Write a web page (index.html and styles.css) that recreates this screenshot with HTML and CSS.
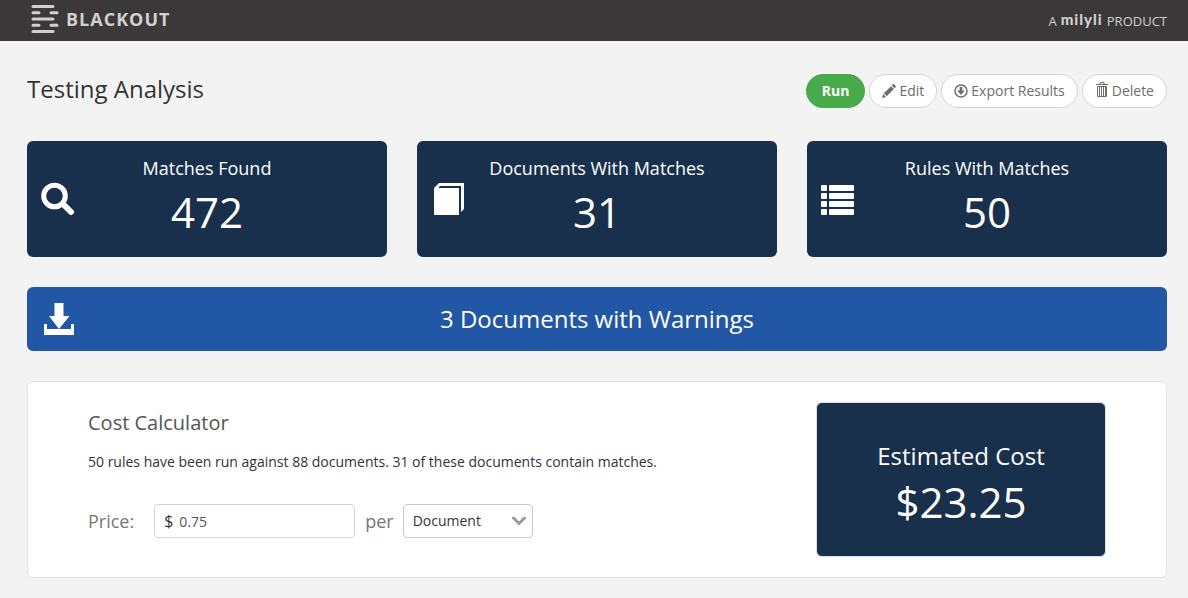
FILE: index.html
```html
<!DOCTYPE html>
<html lang="en">
<head>
<meta charset="utf-8">
<title>Blackout - Testing Analysis</title>
<link rel="stylesheet" href="styles.css">
</head>
<body>
<header class="topbar">
  <a class="brand" href="#">
    <svg class="brand-mark" width="28" height="30" viewBox="0 0 28 30" aria-hidden="true">
      <path d="M2 2.500H22M2 8.700H8M20 8.700H26M2 14.900H22M2 21.200H8M20 21.200H26M2 27.400H22"/>
    </svg>
    <span>BLACKOUT</span>
  </a>
  <p class="maker"><span>A</span><span class="maker-logo">milyli</span><span>PRODUCT</span></p>
</header>

<main class="page">
  <div class="heading">
    <h1>Testing Analysis</h1>
    <div class="actions">
      <button class="btn btn-run" type="button">Run</button>
      <button class="btn" type="button">
        <svg width="14" height="14" viewBox="0 0 15 15" aria-hidden="true"><path d="M0 15l1.200-4.300 3.100 3.100zM2 9.900L9.600 2.300l3.100 3.100L5.100 13zM10.400 1.500L11.500.4q.7-.6 1.400 0L14.600 2.100q.6.700 0 1.400L13.500 4.600z"/></svg>
        Edit
      </button>
      <button class="btn" type="button">
        <svg width="14" height="14" viewBox="0 0 14 14" aria-hidden="true"><circle cx="7" cy="7" r="6" fill="none" stroke="currentColor" stroke-width="1.500"/><path d="M5.700 3h2.600v3.600h2.500L7 11 3.200 6.600h2.500z"/></svg>
        Export Results
      </button>
      <button class="btn" type="button">
        <svg class="trash" width="14" height="16" viewBox="0 0 14 16" aria-hidden="true"><path fill="none" stroke="currentColor" d="M5 2V.5h4V2M1 2.500h12M2.500 4.500h9v10h-9zM4.500 5v9M6.500 5v9M8.500 5v9M10.500 5v9"/></svg>
        Delete
      </button>
    </div>
  </div>

  <section class="stats" aria-label="Summary">
    <article class="stat">
      <svg class="stat-icon" width="34" height="34" viewBox="0 0 34 34" aria-hidden="true"><circle cx="13.500" cy="14" r="10.800" fill="none" stroke="currentColor" stroke-width="5"/><path d="M22 22l8 8" fill="none" stroke="currentColor" stroke-width="6" stroke-linecap="round"/></svg>
      <h2>Matches Found</h2>
      <p>472</p>
    </article>
    <article class="stat">
      <svg class="stat-icon" width="34" height="34" viewBox="0 0 34 34" aria-hidden="true"><path d="M3 6L8 1H33V27L30 30V4H9L7.500 6H28V33H3z"/></svg>
      <h2>Documents With Matches</h2>
      <p>31</p>
    </article>
    <article class="stat">
      <svg class="stat-icon" width="34" height="34" viewBox="0 0 34 34" aria-hidden="true"><g><rect y="3" width="6" height="6" rx="1"/><rect x="8" y="3" width="25" height="6" rx="1"/><rect y="11" width="6" height="6" rx="1"/><rect x="8" y="11" width="25" height="6" rx="1"/><rect y="19" width="6" height="6" rx="1"/><rect x="8" y="19" width="25" height="6" rx="1"/><rect y="27" width="6" height="6" rx="1"/><rect x="8" y="27" width="25" height="6" rx="1"/></g></svg>
      <h2>Rules With Matches</h2>
      <p>50</p>
    </article>
  </section>

  <a class="warnings" href="#">
    <svg class="warnings-icon" width="34" height="34" viewBox="0 0 34 34" aria-hidden="true"><path d="M13.500 1h9v13h6L18 27 8 14h5.500zM3 22h3v5h24v-5h3v11H3z"/></svg>
    3 Documents with Warnings
  </a>

  <section class="calculator">
    <form class="calc-form">
      <h2>Cost Calculator</h2>
      <p>50 rules have been run against 88 documents. 31 of these documents contain matches.</p>
      <div class="fields">
        <label for="price">Price:</label>
        <div class="price-box"><span>$</span><input id="price" type="text" value="0.75"></div>
        <label for="unit">per</label>
        <div class="unit-box">
          <select id="unit"><option>Document</option></select>
          <svg class="chevron" width="14" height="10" viewBox="0 0 14 10" aria-hidden="true"><path d="M1.500 2L7 7.500 12.500 2"/></svg>
        </div>
      </div>
    </form>
    <aside class="estimate">
      <h2>Estimated Cost</h2>
      <p>$23.25</p>
    </aside>
  </section>
</main>
</body>
</html>
```

FILE: styles.css
```css
* { box-sizing: border-box; }
body {
  margin: 0;
  background: #f3f3f3;
  color: #333;
  font-family: "Open Sans", "Liberation Sans", sans-serif;
  font-size: 14px;
  line-height: 20px;
}
h1, h2, p { margin: 0; font-weight: 400; }
svg { fill: currentColor; flex: none; }

.topbar {
  display: flex;
  justify-content: space-between;
  align-items: center;
  height: 41px;
  padding: 0 21px 4px 31px;
  background: #3b3839;
  color: #d0d0cf;
}
.brand {
  display: flex;
  align-items: center;
  gap: 7px;
  color: inherit;
  font-size: 18px;
  font-weight: 700;
  letter-spacing: 1px;
  text-decoration: none;
}
.brand-mark { fill: none; stroke: currentColor; stroke-width: 3; stroke-linecap: round; }
.maker { display: flex; align-items: baseline; gap: 4px; font-size: 13px; padding-top: 4px; }
.maker-logo { font-family: Lato, sans-serif; font-size: 15px; font-weight: 900; letter-spacing: 1px; line-height: 16px; padding-bottom: 2px; align-self: flex-start; }

.page { padding: 33px 21px 20px 27px; }
.heading { display: flex; justify-content: space-between; align-items: center; height: 34px; }
h1 { font-size: 24px; line-height: 32px; padding-bottom: 4px; }
.actions { display: flex; gap: 4px; }
.btn {
  display: flex;
  align-items: center;
  gap: 3px;
  height: 34px;
  padding: 0 12px;
  border: 1px solid #d4d4d4;
  border-radius: 17px;
  background: #fff;
  color: #6d6d6d;
  font: inherit;
}
.btn-run { padding: 0 15px; border-color: #48ab4b; background: #48ab4b; color: #fff; font-weight: 700; }
.trash { margin-bottom: 2px; }

.stats { display: grid; grid-template-columns: repeat(3, 1fr); gap: 30px; margin-top: 33px; }
.stat {
  position: relative;
  height: 116px;
  padding-top: 15px;
  border-radius: 6px;
  background: #18304b;
  color: #fff;
  text-align: center;
}
.stat-icon { position: absolute; left: 14px; top: 41px; }
.stat h2 { font-size: 18px; line-height: 24px; }
.stat p { font-size: 42px; line-height: 64px; }

.warnings {
  position: relative;
  display: flex;
  justify-content: center;
  align-items: center;
  height: 64px;
  margin-top: 30px;
  border-radius: 6px;
  background: #2257a5;
  color: #fff;
  font-size: 24px;
  text-decoration: none;
}
.warnings-icon { position: absolute; left: 14px; top: 15px; }

.calculator {
  display: flex;
  justify-content: space-between;
  gap: 30px;
  margin-top: 30px;
  padding: 20px 60px;
  border: 1px solid #e3e3e3;
  border-radius: 6px;
  background: #fff;
}
.calc-form h2 { color: #555; font-size: 20px; line-height: 28px; margin-top: 7px; }
.calc-form p { margin-top: 15px; }
.fields { display: flex; align-items: center; margin-top: 32px; color: #777; font-size: 18px; }
.price-box {
  display: flex;
  align-items: center;
  width: 201px;
  height: 34px;
  margin: 0 10px 0 20px;
  padding: 0 9px;
  gap: 6px;
  border: 1px solid #d4d4d4;
  border-radius: 4px;
  color: #333;
  font-size: 16px;
}
.price-box input { width: 100%; padding: 1px 0 0; border: 0; background: none; color: #555; font: inherit; font-size: 14px; outline: 0; }
.unit-box { position: relative; margin-left: 9px; }
.unit-box select {
  appearance: none;
  width: 130px;
  height: 34px;
  padding: 0 9px;
  border: 1px solid #c8c8c8;
  border-radius: 4px;
  background: #fff;
  color: #333;
  font: inherit;
  font-size: 14px;
}
.chevron { position: absolute; right: 7px; top: 12px; fill: none; stroke: #999; stroke-width: 3; stroke-linecap: round; pointer-events: none; }

.estimate {
  width: 290px;
  height: 155px;
  padding-top: 37px;
  border: 1px solid #dedede;
  border-radius: 6px;
  background: #18304b;
  color: #fff;
  text-align: center;
}
.estimate h2 { font-size: 24px; line-height: 32px; }
.estimate p { font-size: 42px; line-height: 60px; }
```
